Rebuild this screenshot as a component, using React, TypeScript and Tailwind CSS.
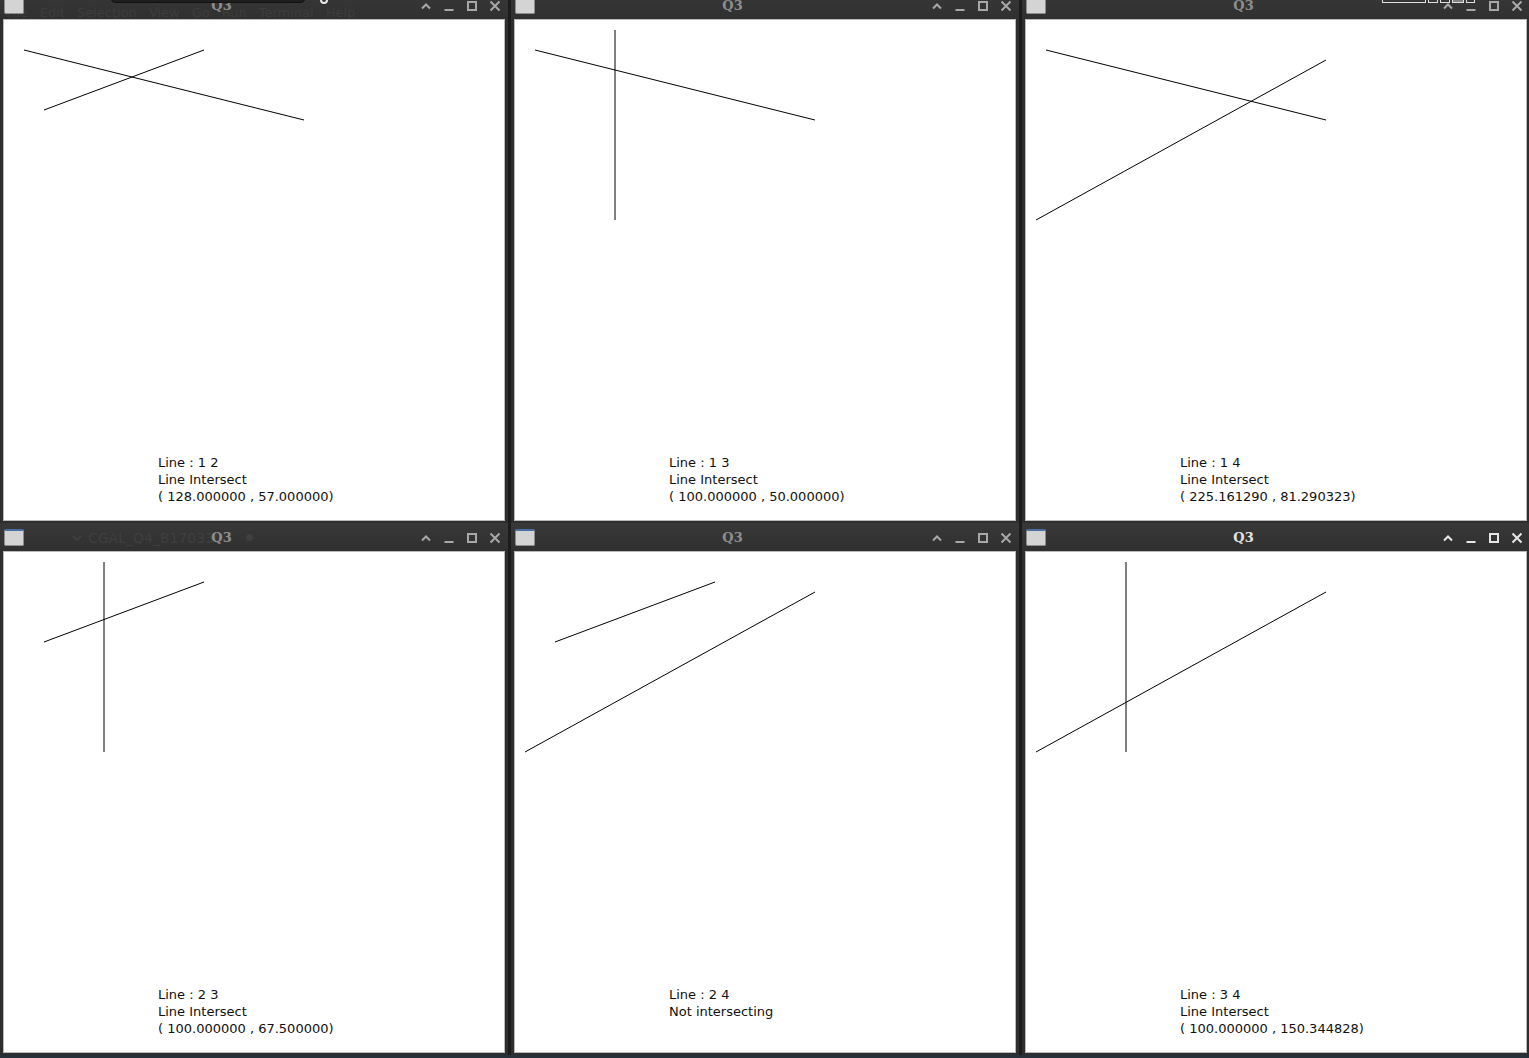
import React from 'react';

// segment ends in canvas coords (canvas is 500x500)
const LINES: Record<number, [number, number, number, number]> = {
  1: [20, 30, 300, 100],
  2: [40, 90, 200, 30],
  3: [100, 10, 100, 200],
  4: [10, 200, 300, 40],
};

type Win = {
  a: number;
  b: number;
  result: string[];
  active?: boolean;
  ghost?: React.ReactNode;
};

const MENU = ['File', 'Edit', 'Selection', 'View', 'Go', 'Run', 'Terminal', 'Help'];

const TOP: Win[] = [
  {
    a: 1,
    b: 2,
    result: ['Line Intersect', '( 128.000000 , 57.000000)'],
    ghost: (
      <div className="absolute left-[6px] top-[15px] flex gap-[12px] text-[13px] leading-none text-[#3d3d3d] whitespace-nowrap">
        {MENU.map((m) => (
          <span key={m}>{m}</span>
        ))}
      </div>
    ),
  },
  { a: 1, b: 3, result: ['Line Intersect', '( 100.000000 , 50.000000)'] },
  { a: 1, b: 4, result: ['Line Intersect', '( 225.161290 , 81.290323)'] },
];

const BOTTOM: Win[] = [
  {
    a: 2,
    b: 3,
    result: ['Line Intersect', '( 100.000000 , 67.500000)'],
    ghost: (
      <>
        <svg className="absolute left-[72px] top-[11px]" width="10" height="8" viewBox="0 0 10 8" fill="none" stroke="#444" strokeWidth="1.3">
          <path d="M1 2 L5 6 L9 2" />
        </svg>
        <span className="absolute left-[88px] top-[6px] text-[14px] leading-[18px] text-[#3f3f3f] whitespace-nowrap">
          CGAL_Q4_B170330
        </span>
        <span className="absolute left-[246px] top-[11px] w-[7px] h-[7px] rounded-full bg-[#3f3f3f]" />
      </>
    ),
  },
  { a: 2, b: 4, result: ['Not intersecting'] },
  { a: 3, b: 4, result: ['Line Intersect', '( 100.000000 , 150.344828)'], active: true },
];

function WinIcon() {
  return (
    <div className="w-[20px] h-[17px] rounded-[2px] bg-[#d4d4d4] border border-[#8d8d8d] border-t-[2px] border-t-[#4a6fa5]" />
  );
}

function Controls({ active }: { active?: boolean }) {
  const c = active ? '#e6e6e6' : '#a8a8a8';
  return (
    <div className="relative flex items-center gap-[9px] pr-[6px] pt-[1px]">
      <svg width="14" height="14" viewBox="0 0 14 14" fill="none" stroke={c} strokeWidth="2">
        <path d="M3 9.5 L7 5.5 L11 9.5" />
      </svg>
      <svg width="14" height="14" viewBox="0 0 14 14" fill="none" stroke={c} strokeWidth="2">
        <path d="M2.5 11 H11.5" />
      </svg>
      <svg width="14" height="14" viewBox="0 0 14 14" fill="none" stroke={c} strokeWidth="2">
        <rect x="3" y="3" width="8" height="8" />
      </svg>
      <svg width="14" height="14" viewBox="0 0 14 14" fill="none" stroke={c} strokeWidth="2">
        <path d="M2.5 2.5 L11.5 11.5 M11.5 2.5 L2.5 11.5" />
      </svg>
    </div>
  );
}

function Window({ win }: { win: Win }) {
  const l1 = LINES[win.a];
  const l2 = LINES[win.b];
  return (
    <div className="w-[508px] shrink-0 bg-[#2e2e2e] flex flex-col">
      <div className="relative h-[28px] flex items-center bg-gradient-to-b from-[#383838] to-[#303030] overflow-hidden">
        {win.ghost}
        <div className="pl-[4px] relative">
          <WinIcon />
        </div>
        <div
          className={`relative flex-1 text-center font-bold text-[13px] pt-[2px] ${
            win.active ? 'text-[#e2e2e2]' : 'text-[#8e8e8e]'
          }`}
          style={{ fontFamily: '"DejaVu Serif", serif' }}
        >
          Q3
        </div>
        <Controls active={win.active} />
      </div>
      <div className="px-[3px] pb-[2px]">
        <div className="border border-[#b9b9b9] bg-white">
          <div className="relative w-[500px] h-[500px]">
            <svg className="absolute inset-0" width="500" height="500" viewBox="0 0 500 500">
              {[l1, l2].map((l, i) => (
                <line key={i} x1={l[0]} y1={l[1]} x2={l[2]} y2={l[3]} stroke="#000" strokeWidth="1" />
              ))}
            </svg>
            <div className="absolute left-[154px] top-[434px] text-[13px] leading-[17px] text-[#111]">
              <div>
                Line : {win.a} {win.b}
              </div>
              {win.result.map((t) => (
                <div key={t} className="whitespace-pre">
                  {t}
                </div>
              ))}
            </div>
          </div>
        </div>
      </div>
    </div>
  );
}

export default function App() {
  return (
    <div
      className="relative w-[1529px] h-[1058px] overflow-hidden bg-[#27313a]"
      style={{ fontFamily: '"DejaVu Sans", "Noto Sans", sans-serif' }}
    >
      <div className="flex flex-col mt-[-9px]">
        <div className="flex gap-[3px] bg-[#1c1c1c]">
          {TOP.map((w) => (
            <Window key={`${w.a}${w.b}`} win={w} />
          ))}
        </div>
        <div className="flex gap-[3px] bg-[#1c1c1c]">
          {BOTTOM.map((w) => (
            <Window key={`${w.a}${w.b}`} win={w} />
          ))}
        </div>
      </div>

      {/* bits of other screen overlays peeking in at the top edge */}
      <div className="absolute left-[110px] top-[-12px] w-[196px] h-[15px] rounded-b-[6px] bg-[#1e1e1e] border border-[#111]" />
      <div className="absolute left-[320px] top-[-4px] w-[8px] h-[8px] rounded-full border-2 border-[#e8e8e8]" />
      <div className="absolute left-[1382px] top-[-10px] flex gap-[2px]">
        <div className="w-[44px] h-[13px] border border-[#e0e0e0]" />
        <div className="w-[10px] h-[13px] border border-[#e0e0e0]" />
        <div className="w-[10px] h-[13px] border border-[#e0e0e0]" />
        <div className="w-[12px] h-[13px] border border-[#e0e0e0] bg-[#808080]" />
        <div className="w-[9px] h-[13px] border border-[#e0e0e0]" />
      </div>
    </div>
  );
}
